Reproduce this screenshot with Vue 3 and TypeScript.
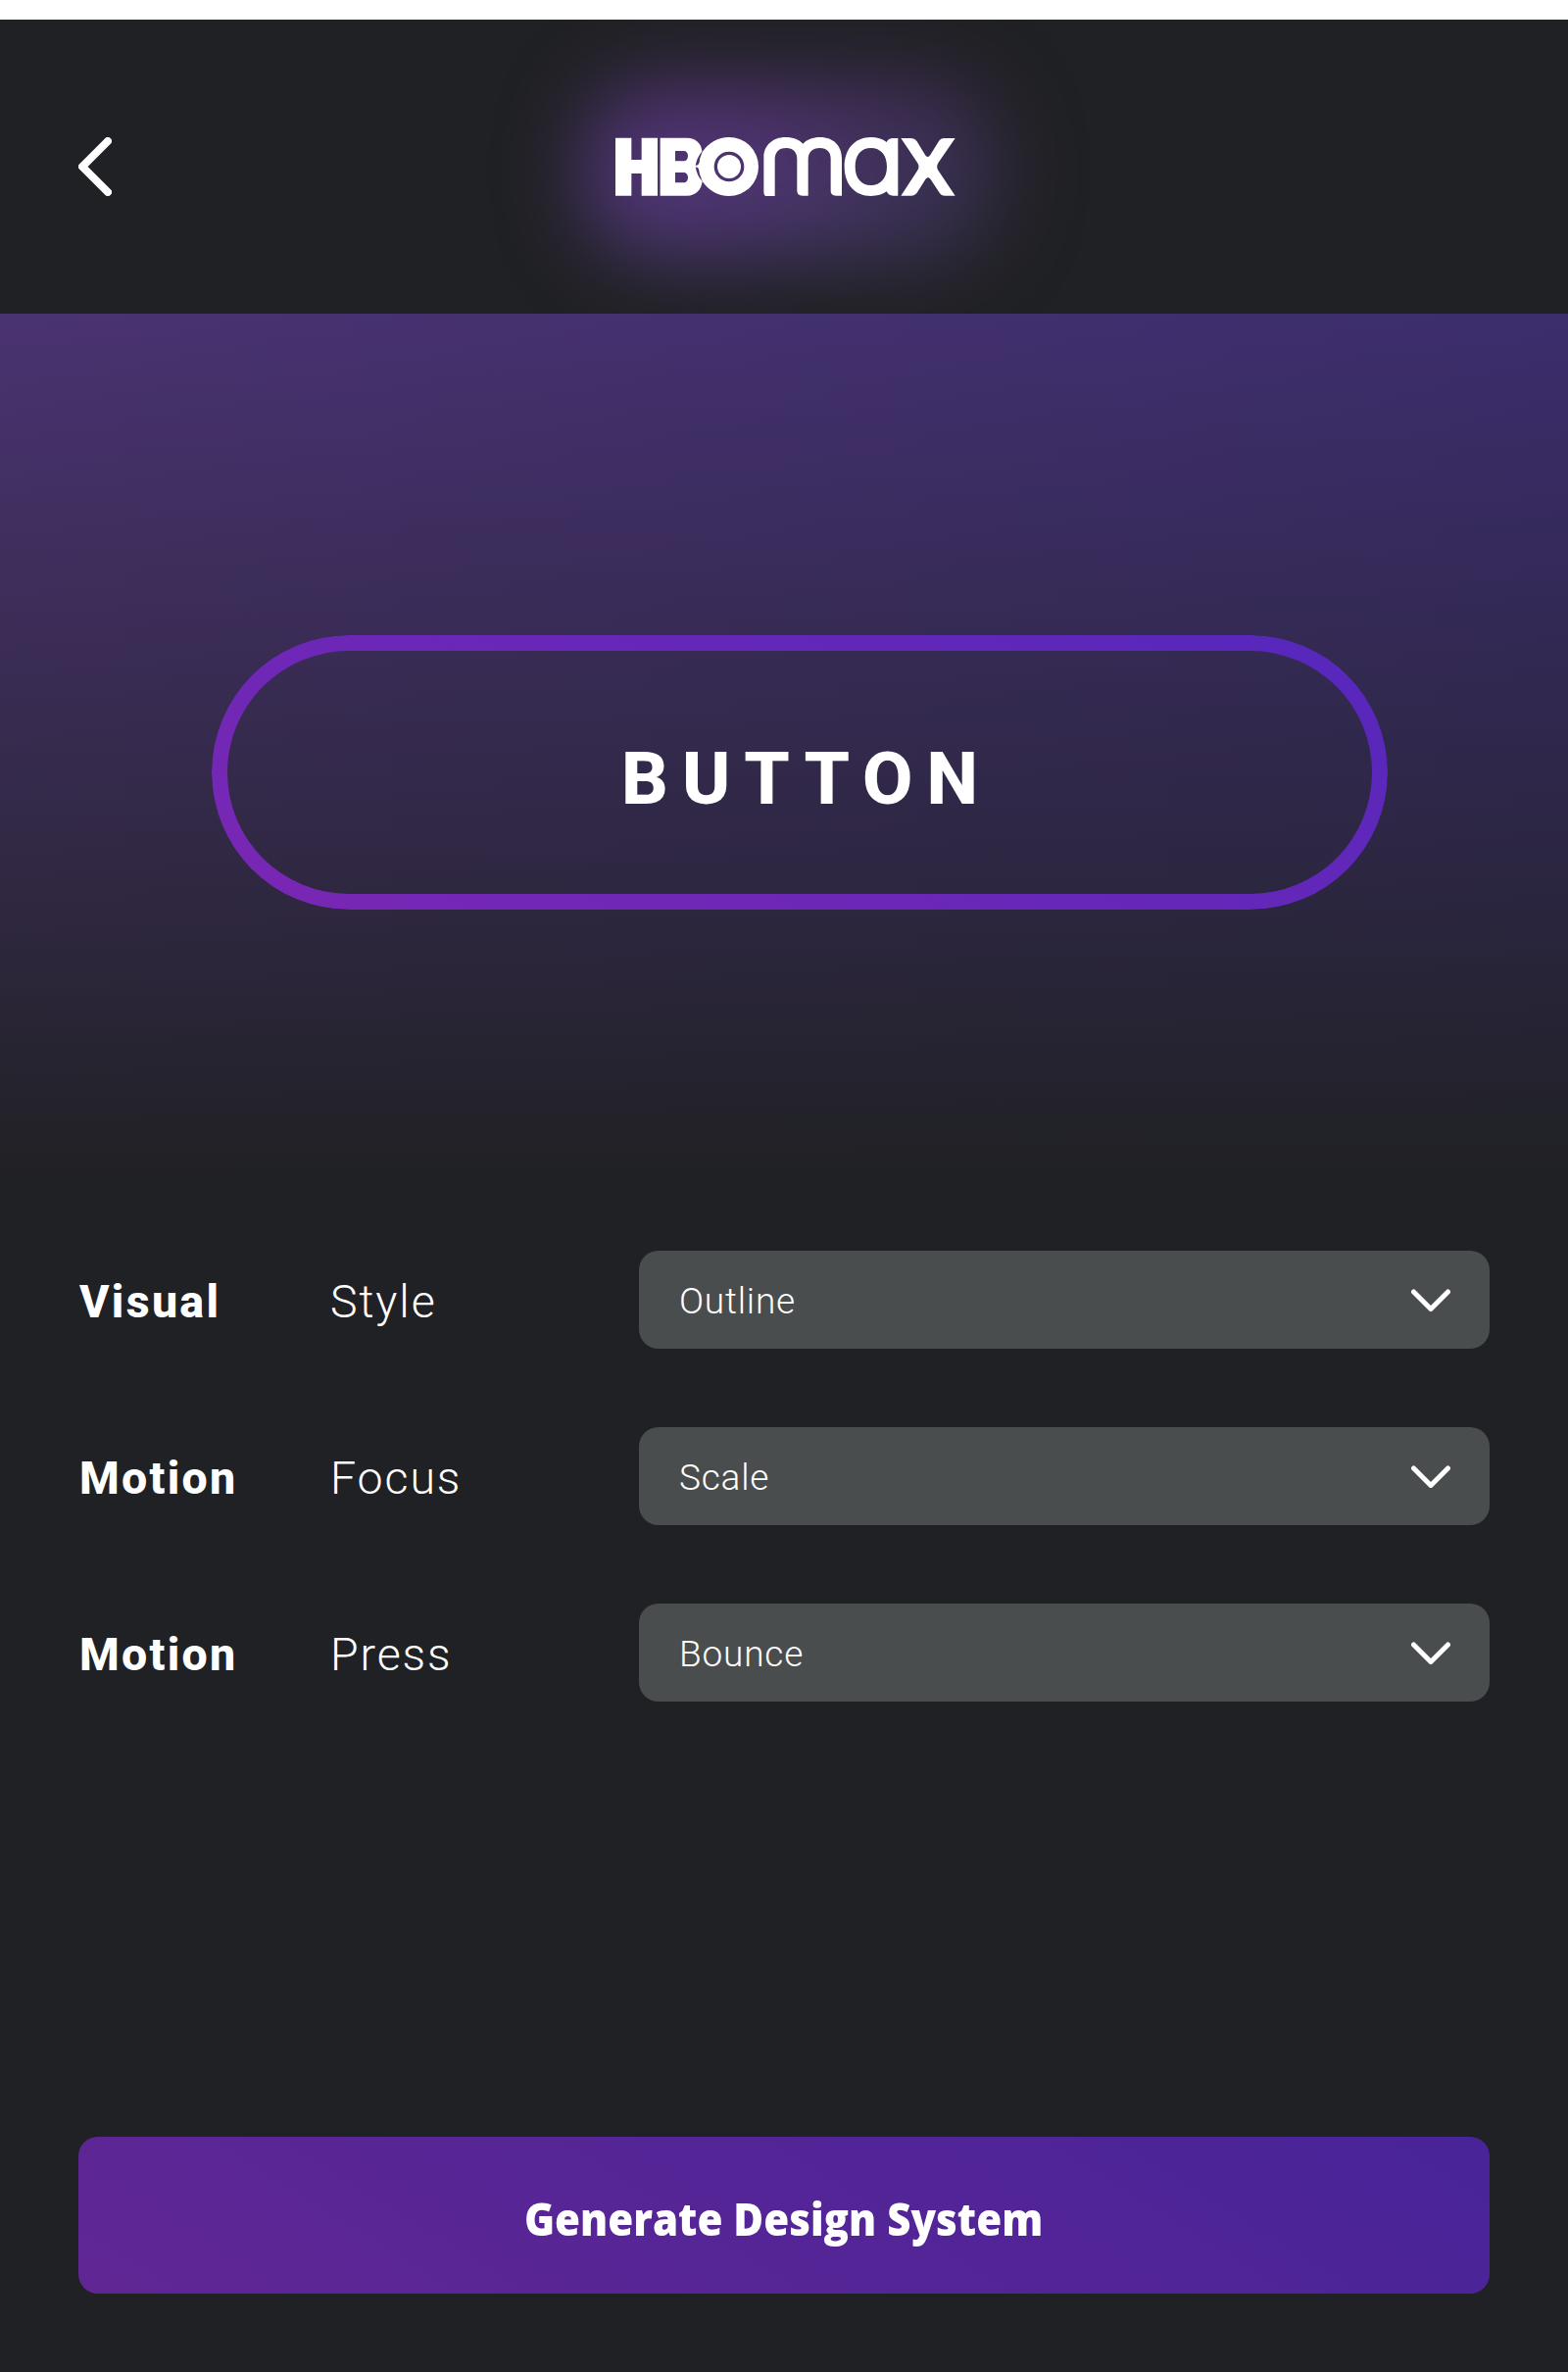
<script setup lang="ts">
interface Setting {
  group: string
  name: string
  value: string
}

const settings: Setting[] = [
  { group: 'Visual', name: 'Style', value: 'Outline' },
  { group: 'Motion', name: 'Focus', value: 'Scale' },
  { group: 'Motion', name: 'Press', value: 'Bounce' },
]
</script>

<template>
  <main class="screen">
    <header class="bar">
      <svg class="back" viewBox="0 0 34 60" width="34" height="60" aria-label="Back">
        <path d="M30 4 4 30 30 56" />
      </svg>
      <div class="brand">
        <div class="glow"></div>
        <svg class="logo" viewBox="84 90 1040 180" width="346.67" height="60" aria-label="HBO Max">
          <path class="solid" fill-rule="evenodd" d="M84 92h49v67h31V92h49v177h-49v-68h-31v68H84Z" />
          <path class="solid" fill-rule="evenodd" d="M221 92h82c27 0 45 17 46 42-11 13-17 25-20 45 3 19 9 33 21 46-3 26-20 44-47 44h-82ZM267 132v31h26c8 0 13-7 13-16s-5-15-13-15ZM267 198v31h26c8 0 13-7 13-16s-5-15-13-15Z" />
          <path class="solid" fill-rule="evenodd" d="M432 90a90 90 0 0 1 0 180c-34 0-63-17-82-45l-8-22c-2-8-1-13-5-19l-13-5 13-5c4-5 5-9 5-17l8-22c19-28 48-45 82-45ZM432 134a46 46 0 1 0 0 92 46 46 0 0 0 0-92Z" />
          <circle class="solid" cx="432" cy="180" r="36" />
          <path class="solid" d="M538 269V151c0-36 28-61 66-61 25 0 42 7 54 20 12-13 30-20 53-20 40 0 66 26 66 65v114h-17c-12 0-17-6-17-16v-97c0-21-12-33-33-33-23 0-36 13-36 35v111h-17c-12 0-17-6-17-16v-96c0-21-12-34-33-34-24 0-35 14-35 36v114h-17c-12 0-17-6-17-16Z" />
          <path class="solid" fill-rule="evenodd" d="M866 90c19 0 36 5 48 15 4-8 10-12 20-12h15v176h-15c-10 0-16-5-20-13-12 9-28 14-48 14-49 0-81-36-81-90s32-90 81-90ZM866 123c-30 0-48 22-48 57s18 57 48 57 49-22 49-57-19-57-49-57Z" />
          <path class="solid" d="M958 93h29c9 0 15 3 20 10l25 41c5 8 11 8 16 0l26-42c4-6 9-9 17-9h33l-51 74c-6 9-6 17 0 26l51 76h-31c-8 0-13-3-17-9l-27-41c-5-7-11-7-16 0l-26 41c-5 6-10 9-18 9h-31l50-76c6-9 6-17 0-26Z" />
        </svg>
      </div>
    </header>

    <section class="preview">
      <button class="sample" type="button">BUTTON</button>
    </section>

    <section class="settings">
      <div v-for="(s, i) in settings" :key="i" class="row">
        <span class="group">{{ s.group }}</span>
        <span class="name">{{ s.name }}</span>
        <div class="select">
          <span class="value">{{ s.value }}</span>
          <svg viewBox="0 0 40 24" width="40" height="24"><path d="M2.5 4 20 21.500 37.500 4" /></svg>
        </div>
      </div>
    </section>

    <button class="generate" type="button"><span>Generate Design System</span></button>
  </main>
</template>

<style>
body {
  background: #fff;
}
</style>

<style scoped>
.screen {
  box-sizing: border-box;
  width: 1600px;
  height: 2400px;
  margin-top: 20px;
  display: flex;
  flex-direction: column;
  background: #202124;
  color: #fff;
  font-family: Roboto, "Liberation Sans", sans-serif;
}

button {
  margin: 0;
  padding: 0;
  border: 0;
  background: none;
  color: inherit;
  font-family: inherit;
}

.bar {
  position: relative;
  height: 300px;
  padding: 0 80px;
  display: flex;
  align-items: center;
  overflow: hidden;
}

.back path,
.select path {
  fill: none;
  stroke: #fff;
  stroke-linecap: round;
  stroke-linejoin: round;
}

.back path {
  stroke-width: 8;
}

.brand {
  position: relative;
  display: flex;
  margin-left: 514px;
}

.logo {
  position: relative;
}

.solid {
  fill: #fff;
}

.glow {
  position: absolute;
  inset: -58px -44px -66px -36px;
  border-radius: 80px;
  background:
    radial-gradient(ellipse 170px 110px at 130px 90px, rgba(100, 54, 142, 0.36), transparent),
    linear-gradient(to bottom, rgba(82, 36, 98, 0.35), transparent 60%),
    linear-gradient(to right, #4a3670, #433563 55%, #342f49);
  filter: blur(40px);
}

.preview {
  position: relative;
  z-index: 1;
  height: 888px;
  display: flex;
  justify-content: center;
  align-items: flex-start;
  padding: 328px 0 0 32px;
  box-sizing: border-box;
  background:
    linear-gradient(to bottom, rgba(32, 33, 36, 0), rgba(32, 33, 36, 0.61) 580px, #202124),
    linear-gradient(to right, #4a3371, #3c2d6d);
}

.sample {
  position: relative;
  width: 1200px;
  height: 280px;
  border-radius: 140px;
  padding: 12px 0 0 14px;
  font-size: 74.5px;
  font-weight: 800;
  letter-spacing: 14px;
}

.sample::before {
  content: "";
  position: absolute;
  inset: 0;
  padding: 16px;
  border-radius: 140px;
  background: linear-gradient(28deg, #7a27b4, #5627bc);
  mask: linear-gradient(#000 0 0) content-box exclude, linear-gradient(#000 0 0);
}

.settings {
  display: flex;
  flex-direction: column;
  gap: 80px;
  padding: 68px 80px 0;
}

.row {
  display: grid;
  grid-template-columns: 257px 315px 868px;
  align-items: center;
  height: 100px;
  font-size: 46.5px;
  line-height: 96px;
}

.group {
  font-weight: 800;
  letter-spacing: 2.3px;
  padding: 4px 0 0 1px;
}

.name {
  font-weight: 300;
  letter-spacing: 1.9px;
  padding-top: 4px;
}

.select {
  display: flex;
  align-items: center;
  justify-content: space-between;
  height: 100px;
  box-sizing: border-box;
  padding: 0 40px;
  border-radius: 20px;
  background: #4a4d4d;
}

.value {
  font-size: 37px;
  font-weight: 300;
  letter-spacing: 0.8px;
  padding: 4px 0 0 1px;
}

.select path {
  stroke-width: 5;
}

.generate {
  width: 1440px;
  height: 160px;
  margin: auto 80px 80px;
  border-radius: 20px;
  background: linear-gradient(32deg, #602694, #482499);
  font-family: "Open Sans", sans-serif;
  font-size: 46px;
  font-weight: 800;
  padding-top: 5px;
}

.generate span {
  display: inline-block;
  transform: scaleX(0.914);
}
</style>
